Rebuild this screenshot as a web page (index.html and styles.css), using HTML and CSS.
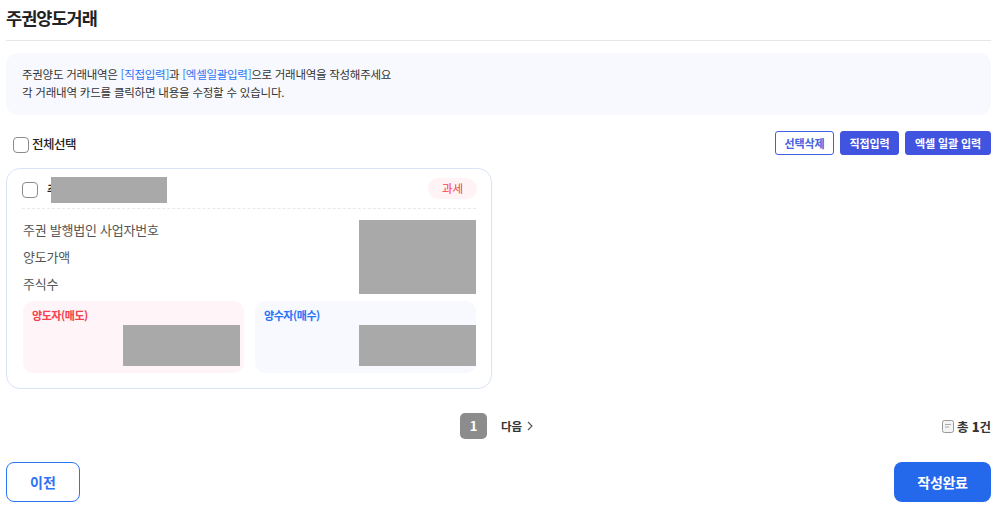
FILE: index.html
```html
<!DOCTYPE html>
<html lang="ko">
<head>
<meta charset="utf-8">
<title>주권양도거래</title>
<link rel="stylesheet" href="styles.css">
</head>
<body>
<main class="page">
  <h1 class="title">주권양도거래</h1>
  <section class="notice">
    <p class="lead">주권양도 거래내역은 <span class="link">[직접입력]</span>과 <span class="link">[엑셀일괄입력]</span>으로 거래내역을 작성해주세요</p>
    <p>각 거래내역 카드를 클릭하면 내용을 수정할 수 있습니다.</p>
  </section>
  <div class="toolbar">
    <label class="select-all"><span class="check"></span><span>전체선택</span></label>
    <div class="actions">
      <button class="btn btn-outline">선택삭제</button>
      <button class="btn btn-solid">직접입력</button>
      <button class="btn btn-solid btn-wide">엑셀 일괄 입력</button>
    </div>
  </div>
  <article class="card">
    <header class="card-head">
      <span class="check"></span>
      <span class="card-name">주식회사</span>
      <span class="tag">과세</span>
    </header>
    <div class="rows">
      <div>주권 발행법인 사업자번호</div>
      <div>양도가액</div>
      <div>주식수</div>
    </div>
    <div class="parties">
      <div class="party party-sell">양도자(매도)</div>
      <div class="party party-buy">양수자(매수)</div>
    </div>
    <div class="mask mask-name"></div>
    <div class="mask mask-values"></div>
    <div class="mask mask-sell"></div>
    <div class="mask mask-buy"></div>
  </article>
  <div class="pager-row">
    <span></span>
    <nav class="pager">
      <span class="page-num">1</span>
      <span class="next">다음
        <svg class="chevron" width="8" height="10" viewBox="0 0 8 10"><path d="M2 1l4 4-4 4" fill="none" stroke="#555" stroke-width="1.1"/></svg>
      </span>
    </nav>
    <div class="total">
      <svg width="12" height="13" viewBox="0 0 12 13"><rect x=".5" y=".5" width="11" height="12" rx="2" fill="#f4f4f4" stroke="#999"/><path d="M3 4.5h6M3 7h4" stroke="#aaa"/></svg>
      <span>총 <b>1</b>건</span>
    </div>
  </div>
  <footer class="footer">
    <button class="nav-btn prev">이전</button>
    <button class="nav-btn done">작성완료</button>
  </footer>
</main>
</body>
</html>
```
FILE: styles.css
```css
* { box-sizing: border-box; }
html, body { margin: 0; background: #fff; }
body {
  font-family: "Noto Sans CJK KR", "Noto Sans", sans-serif;
  color: #222;
  height: 509px;
  overflow: hidden;
}
.page { padding: 0 9px 0 6px; }
p { margin: 0; }
.title {
  margin: 0;
  height: 41px;
  padding-top: 5px;
  border-bottom: 1px solid #e6e6e6;
  font-size: 17.5px;
  line-height: 26px;
  font-weight: 700;
  letter-spacing: -0.95px;
}
.notice {
  margin-top: 12px;
  height: 62px;
  padding: 12px 16px;
  border-radius: 12px;
  background: #f7f9fe;
  font-size: 11.5px;
  line-height: 18px;
  color: #333;
  letter-spacing: -0.22px;
}
.lead { letter-spacing: -0.28px; }
.link { color: #2a74f5; }
.toolbar {
  margin-top: 16px;
  height: 24px;
  padding-left: 7px;
  display: flex;
  align-items: center;
  justify-content: space-between;
}
.select-all {
  display: flex;
  align-items: center;
  gap: 3px;
  font-size: 12.5px;
  font-weight: 500;
  letter-spacing: -0.5px;
}
.select-all .check { margin-top: 3px; }
.check {
  display: block;
  flex: none;
  width: 16px;
  height: 16px;
  border: 1px solid #8c8c8c;
  border-radius: 4px;
  background: #fff;
}
.actions { display: flex; gap: 6px; }
.btn {
  height: 24px;
  padding: 0 8.4px;
  border-radius: 3px;
  font: 700 11px/22px "Noto Sans CJK KR", sans-serif;
  letter-spacing: -0.1px;
}
.btn-wide { padding: 0 9px; }
.btn-outline { border: 1px solid #4360e0; background: #fff; color: #4360e0; }
.btn-solid { border: 1px solid #4054e0; background: #4054e0; color: #fff; }
.card {
  position: relative;
  margin-top: 13px;
  width: 486px;
  height: 221px;
  padding: 0 15px 0 16px;
  border: 1px solid #d9e3f6;
  border-radius: 14px;
  background: #fff;
}
.card-head {
  height: 40px;
  display: flex;
  align-items: center;
  gap: 9px;
  border-bottom: 1px dashed #e8e8e8;
  padding: 2px 0 0;
  margin-left: -1px;
}
.card-name { font-size: 12.5px; font-weight: 700; }
.tag {
  margin: -2px -1px 0 auto;
  width: 49px;
  height: 21px;
  border-radius: 11px;
  background: #fff3f5;
  color: #f5404e;
  font-size: 11.5px;
  line-height: 20px;
  text-align: center;
}
.rows {
  padding-top: 7px;
  font-size: 13px;
  line-height: 27px;
  color: #555;
  letter-spacing: -0.25px;
}
.parties {
  margin-top: 4px;
  display: grid;
  grid-template-columns: 221px 221px;
  gap: 11px;
}
.party {
  height: 72px;
  padding: 6px 9px;
  border-radius: 10px;
  font-size: 11px;
  line-height: 17px;
  font-weight: 700;
  letter-spacing: -0.45px;
}
.party-sell { background: #fff4f7; color: #f5404e; }
.party-buy { background: #f7f9fe; color: #2a74f5; }
.mask { position: absolute; background: #a9a9a9; }
.mask-name { left: 44px; top: 8px; width: 116px; height: 26px; }
.mask-values { left: 352px; top: 51px; width: 117px; height: 74px; }
.mask-sell { left: 116px; top: 156px; width: 117px; height: 41px; }
.mask-buy { left: 352px; top: 156px; width: 117px; height: 41px; }
.pager-row {
  margin-top: 24px;
  height: 26px;
  display: grid;
  grid-template-columns: 1fr auto 1fr;
  align-items: center;
}
.pager { display: flex; align-items: center; gap: 14px; padding-right: 3px; }
.page-num {
  width: 27px;
  height: 26px;
  border-radius: 5px;
  background: #8c8c8c;
  color: #fff;
  font-size: 13px;
  font-weight: 700;
  line-height: 25px;
  text-align: center;
}
.next {
  display: flex;
  align-items: center;
  gap: 4px;
  font-size: 11.5px;
  font-weight: 700;
  color: #333;
  letter-spacing: -0.2px;
}
.total {
  justify-self: end;
  display: flex;
  align-items: center;
  gap: 3px;
  font-size: 12.5px;
  font-weight: 700;
  color: #333;
  letter-spacing: -0.1px;
}
.total b { font-size: 13px; }
.footer {
  margin-top: 23px;
  display: flex;
  justify-content: space-between;
}
.nav-btn {
  height: 40px;
  border-radius: 8px;
  font: 700 14px/20px "Noto Sans CJK KR", sans-serif;
}
.prev { width: 74px; border: 1px solid #2a74f5; background: #fff; color: #2a74f5; }
.done { width: 97px; border: 0; background: #2468ec; color: #fff; letter-spacing: -0.3px; }
```
